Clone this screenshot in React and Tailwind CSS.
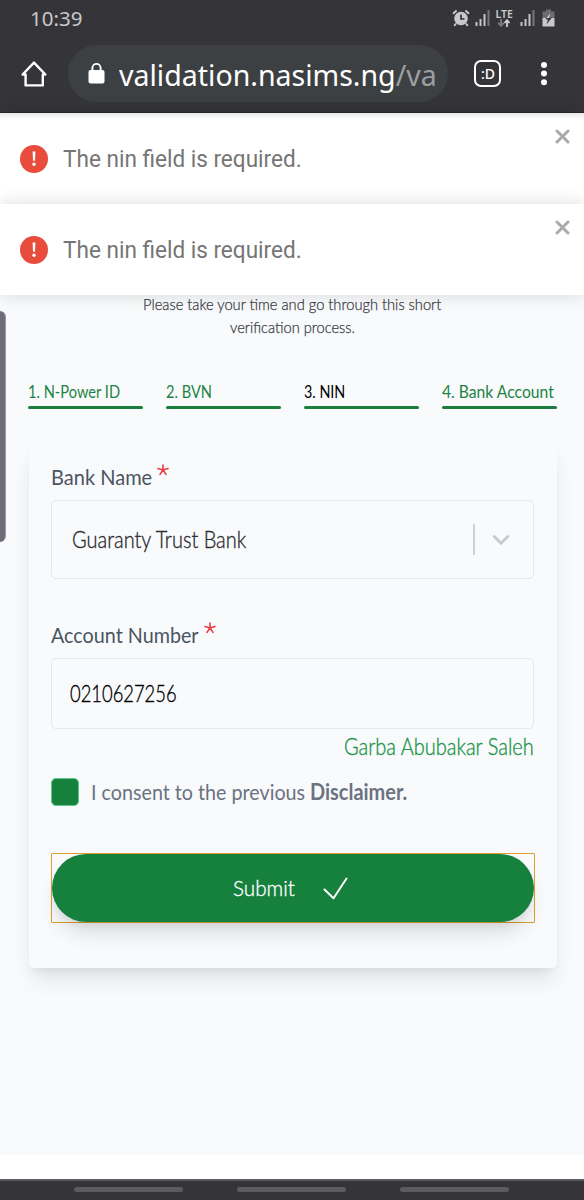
import { useLayoutEffect, useRef } from "react";

const steps = [
  { label: "1. N-Power ID", width: 92, color: "text-[#1c8344]" },
  { label: "2. BVN", width: 46, color: "text-[#1c8344]" },
  { label: "3. NIN", width: 41, color: "text-black" },
  { label: "4. Bank Account", width: 112, color: "text-[#1c8344]" },
];

// condenses a line of text to the given width
function Fit({ width, className = "", children }) {
  const box = useRef(null);
  const text = useRef(null);

  useLayoutEffect(() => {
    const natural = text.current.offsetWidth;
    box.current.style.width = `${width}px`;
    text.current.style.transform = `scaleX(${width / natural})`;
  }, [width]);

  return (
    <span ref={box} className={`block shrink-0 whitespace-nowrap ${className}`}>
      <span ref={text} className="inline-block origin-left">
        {children}
      </span>
    </span>
  );
}

function Signal() {
  return (
    <svg width="16" height="18" viewBox="0 0 16 18" fill="#c4c4c6">
      <rect x="0.5" y="13" width="2" height="4" />
      <rect x="4.5" y="10" width="2" height="7" />
      <rect x="8.5" y="5" width="2" height="12" />
      <rect x="12.5" y="1" width="2" height="16" fill="#77777b" />
    </svg>
  );
}

function StatusBar() {
  return (
    <div className="flex h-9 items-center pl-[30px] pr-[29px] text-[#c9c9cb]">
      <Fit width={52} className="font-['Noto_Sans'] text-[20.5px] leading-[34px]">
        10:39
      </Fit>
      <div className="ml-auto flex items-center">
        <svg width="18" height="18" viewBox="0 0 18 18" fill="none" className="mr-[5px]">
          <circle cx="9" cy="9.5" r="6.8" fill="#c9c9cb" />
          <path d="M9 5.5V10H12.5" stroke="#353538" strokeWidth="1.7" />
          <path d="M1 4.8L4.6 1.5M17 4.8L13.4 1.5M4 14.5L2.2 16.8M14 14.5L15.8 16.8" stroke="#c9c9cb" strokeWidth="1.9" />
        </svg>
        <Signal />
        <div className="ml-[4px] mr-[7px] flex w-[18px] flex-col items-center">
          <Fit width={17} className="font-['Noto_Sans'] text-[10.5px] font-semibold leading-[10px]">
            LTE
          </Fit>
          <svg width="14" height="8" viewBox="0 0 14 8" fill="none" strokeWidth="1.8">
            <path d="M4 0V6.5M1.2 3.8L4 6.8L6.8 3.8" stroke="#7d7d81" />
            <path d="M10 8V1.2M7.4 4L10 1.2L12.6 4" stroke="#d0d0d2" />
          </svg>
        </div>
        <Signal />
        <svg width="13" height="18" viewBox="0 0 13 18" className="ml-[6px]">
          <path d="M4 0.5H9V2.5H12.5V9H0.5V2.5H4Z" fill="#6d6d70" />
          <path d="M0.5 9H12.5V17.5H0.5Z" fill="#c9c9cb" />
          <path d="M8.5 4L3.5 10.5H6L4.5 15.5L9.8 8.8H7.2Z" fill="#353538" />
          <path d="M8.5 4L4.6 9H7.2Z" fill="#d8d8da" />
        </svg>
      </div>
    </div>
  );
}

function BrowserBar() {
  return (
    <div className="flex h-[76px] items-start pt-[9px]">
      <svg width="28" height="28" viewBox="0 0 28 28" fill="none" stroke="#fff" strokeWidth="2.4" strokeLinejoin="round" strokeLinecap="round" className="ml-5 mt-[15px] shrink-0">
        <path d="M2.6 14.5L14 2.6L25.4 14.5H22.8V25.4H5.6V14.5Z" />
      </svg>
      <div className="ml-5 flex h-[57px] w-[380px] items-center rounded-full bg-[#3c4043] pl-[20px]">
        <svg width="17" height="21" viewBox="0 0 17 21" className="mb-px mr-[14px] shrink-0">
          <rect x="0.5" y="7" width="16" height="13.5" rx="2" fill="#fff" />
          <path d="M4.4 8V5A4.1 4.1 0 0 1 12.6 5V8" fill="none" stroke="#fff" strokeWidth="1.9" />
        </svg>
        <Fit width={318} className="mt-[2px] font-['Noto_Sans'] text-[29.5px] leading-[55px] text-white">
          validation.nasims.ng<span className="text-[#9b9fa2]">/va</span>
        </Fit>
      </div>
      <div className="ml-[26px] mt-[15px] flex h-[27px] w-[27px] shrink-0 items-center justify-center rounded-[7px] border-[2px] border-white pb-px font-['Noto_Sans'] text-[15px] font-medium leading-none text-white">
        <Fit width={14}>:D</Fit>
      </div>
      <svg width="8" height="26" viewBox="0 0 8 26" fill="#fff" className="ml-[39px] mt-[16px]">
        <circle cx="4" cy="4" r="3" />
        <circle cx="4" cy="12.5" r="3" />
        <circle cx="4" cy="21.2" r="3" />
      </svg>
    </div>
  );
}

function Toast() {
  return (
    <div className="flex h-[91px] items-start bg-white pl-5 pr-[14px] shadow-[0_0_17px_rgba(0,0,0,0.14)]">
      <svg width="28" height="28" viewBox="0 0 28 28" className="mt-[32px]">
        <circle cx="14" cy="14" r="14" fill="#e74c3c" />
        <path d="M12.6 6.5H15.4L15 15.8H13Z" fill="#fff" />
        <circle cx="14" cy="19.3" r="1.7" fill="#fff" />
      </svg>
      <Fit width={239} className="ml-[15px] mt-[30px] font-['Roboto'] text-[23.5px] leading-8 text-[#757575]">
        The nin field is required.
      </Fit>
      <svg width="15" height="15" viewBox="0 0 15 15" stroke="#aaa" strokeWidth="3" strokeLinecap="round" className="ml-auto mt-[16px]">
        <path d="M2 2L13 13M13 2L2 13" />
      </svg>
    </div>
  );
}

function Label({ width, children }) {
  return (
    <div className="flex h-[30px] items-start text-[#4a5462]">
      <Fit width={width} className="text-[22px] leading-[29px]">
        {children}
      </Fit>
      <svg width="12" height="12" viewBox="0 0 12 12" stroke="#e53e3e" strokeWidth="1.6" strokeLinecap="round" className="ml-[5px] mt-[2px]">
        <path d="M6 6V1M6 6L1 4.6M6 6L11 4.6M6 6L3 10.4M6 6L9 10.4" />
      </svg>
    </div>
  );
}

export default function App() {
  return (
    <div className="relative flex h-[1200px] w-[584px] flex-col overflow-hidden bg-white font-['Lato',sans-serif]">
      <header className="h-[113px] shrink-0 border-b border-[#27272a] bg-[#353539]">
        <StatusBar />
        <BrowserBar />
      </header>

      <div className="relative z-10 shrink-0 bg-white">
        <div className="absolute inset-x-0 top-0 z-10 h-[7px] bg-linear-to-b from-[#e9e9ec] to-transparent" />
        <Toast />
        <Toast />
      </div>

      <main className="h-[860px] shrink-0 bg-[#f9fafc]">
        <div className="-mt-[2px] flex flex-col items-center text-[16.5px] font-light leading-[23px] text-[#34383e] [-webkit-text-stroke:0.25px]">
          <Fit width={298} className="relative z-20">
            Please take your time and go through this short
          </Fit>
          <Fit width={125}>verification process.</Fit>
        </div>

        <div className="ml-[28px] mt-[41px] grid w-[529px] grid-cols-4 gap-[23px]">
          {steps.map((step) => (
            <div key={step.label} className={step.color}>
              <Fit width={step.width} className="text-[17.5px] leading-[24px]">
                {step.label}
              </Fit>
              <div className="mt-[2px] h-[3px] rounded-full bg-[#1c7d3e]" />
            </div>
          ))}
        </div>

        <div className="ml-[29px] mt-[33px] h-[526px] w-[528px] rounded-[5px] pl-[22px] pr-[23px] pt-[20px] shadow-[0_15px_22px_-4px_rgba(0,0,0,0.1),0_6px_9px_-3px_rgba(0,0,0,0.05)]">
          <Label width={101}>Bank Name</Label>
          <div className="mt-[8px] flex h-[79px] items-center rounded-[5px] border border-[#e5e7ea] pl-[20px] pr-[23px]">
            <Fit width={174} className="text-[22.5px] font-light leading-[30px] text-[#2b2b2e] [-webkit-text-stroke:0.35px]">
              Guaranty Trust Bank
            </Fit>
            <div className="ml-auto h-[31px] w-[2px] bg-[#d0d0d3]" />
            <svg width="18" height="12" viewBox="0 0 18 12" fill="none" stroke="#c9cacd" strokeWidth="3" strokeLinecap="round" strokeLinejoin="round" className="ml-[17px]">
              <path d="M2.2 2.5L9 9.3L15.8 2.5" />
            </svg>
          </div>

          <div className="mt-[41px]">
            <Label width={148}>Account Number</Label>
          </div>
          <div className="mt-[8px] flex h-[71px] items-center rounded-[5px] border border-[#e5e7ea] pl-[18px]">
            <Fit width={107} className="text-[22.5px] font-light leading-[30px] text-black [-webkit-text-stroke:0.35px]">
              0210627256
            </Fit>
          </div>

          <div className="mt-[3px] flex h-[30px] justify-end">
            <Fit width={190} className="text-[22.5px] font-light leading-[30px] text-[#1b9447] [-webkit-text-stroke:0.35px]">
              Garba Abubakar Saleh
            </Fit>
          </div>

          <div className="mt-[16px] flex h-[28px] items-center text-[22px] leading-[28px] text-[#6b7280]">
            <div className="h-[28px] w-[28px] rounded-[5px] border border-[#5dc98a] bg-[#16803d]" />
            <Fit width={214} className="ml-[12px]">
              I consent to the previous
            </Fit>
            <Fit width={97} className="ml-[5px] font-bold">
              Disclaimer.
            </Fit>
          </div>

          <div className="-mr-px mt-[47px] h-[70px] rounded-[1px] border border-[#dd9f2f]">
            <button className="flex h-full w-full items-center rounded-full bg-[#16803d] pl-[181px] text-white shadow-[0_15px_20px_-4px_rgba(0,0,0,0.12),0_5px_8px_-3px_rgba(0,0,0,0.08)]">
              <Fit width={62} className="text-[22px] font-light leading-[30px] [-webkit-text-stroke:0.35px]">
                Submit
              </Fit>
              <svg width="25" height="23" viewBox="0 0 25 23" fill="none" stroke="#fff" strokeWidth="2" strokeLinecap="round" strokeLinejoin="round" className="ml-[28px]">
                <path d="M1.5 12.5L10.5 21.2L23.5 1.5" />
              </svg>
            </button>
          </div>
        </div>
      </main>

      <footer className="mt-auto flex h-[21px] shrink-0 items-start gap-[54px] border-t-2 border-[#5b5c60] bg-[#353539] pl-[74px] pt-[6px]">
        <span className="h-[5px] w-[109px] rounded-full bg-[#5b5c60]" />
        <span className="h-[5px] w-[109px] rounded-full bg-[#5b5c60]" />
        <span className="h-[5px] w-[109px] rounded-full bg-[#5b5c60]" />
      </footer>

      {/* edge panel handle */}
      <div className="absolute left-0 top-[311px] h-[231px] w-[6px] rounded-r-[6px] border-r border-[#9a98a3] bg-[#6e6b7b]" />
    </div>
  );
}
